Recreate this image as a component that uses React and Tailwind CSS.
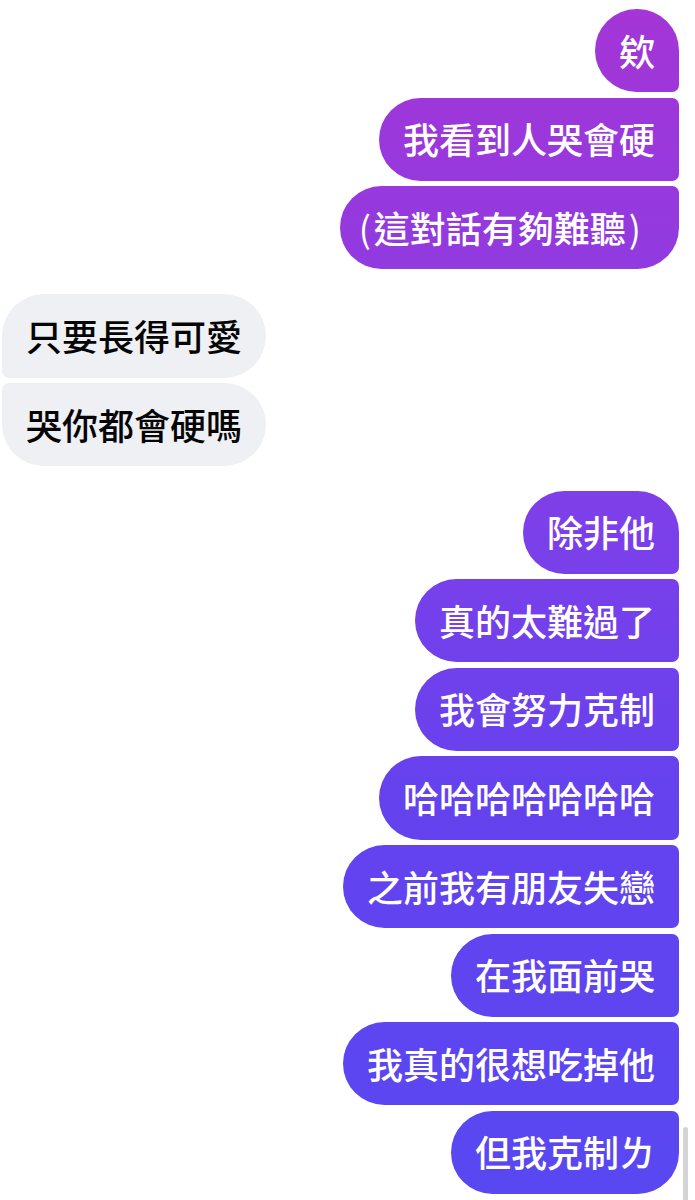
import React from "react";

const grad =
  "bg-[linear-gradient(to_bottom,#a535d6_0%,#7e3fe9_42%,#6442ee_67%,#5848f2_100%)] bg-fixed";

function Out({ children, shape }) {
  return (
    <div className="flex justify-end pr-[16px]">
      <div
        className={`${grad} ${shape} h-[83.3px] px-[24px] pb-[2px] flex items-center text-white text-[36px] leading-none font-medium whitespace-nowrap`}
      >
        {children}
      </div>
    </div>
  );
}

function In({ children, shape }) {
  return (
    <div className="flex justify-start pl-[2px]">
      <div
        className={`bg-[#eff0f4] ${shape} h-[83.3px] px-[24px] pb-[2px] flex items-center text-[#050505] text-[36px] leading-none font-medium whitespace-nowrap`}
      >
        {children}
      </div>
    </div>
  );
}

const firstR = "rounded-l-[42px] rounded-tr-[42px] rounded-br-[7px]";
const midR = "rounded-l-[42px] rounded-r-[7px]";
const lastR = "rounded-l-[42px] rounded-tr-[7px] rounded-br-[42px]";
const inFirst = "rounded-r-[42px] rounded-tl-[42px] rounded-bl-[7px]";
const inLast = "rounded-r-[42px] rounded-tl-[7px] rounded-bl-[42px]";

export default function App() {
  return (
    <div
      className="relative w-[695px] h-[1200px] bg-white overflow-hidden"
      style={{ fontFamily: '"Noto Sans CJK TC", "Noto Sans CJK SC", sans-serif' }}
    >
      <div className="flex flex-col pt-[9px]">
        <div className="flex flex-col gap-[5.3px]">
          <Out shape={firstR}>欸</Out>
          <Out shape={midR}>我看到人哭會硬</Out>
          <Out shape={lastR}>
            <span className="-ml-[5px] mr-[3px] font-normal">(</span>這對話有夠難聽
            <span className="ml-[3px] mr-[14px] font-normal">)</span>
          </Out>
        </div>
        <div className="flex flex-col gap-[5.3px] mt-[24.8px]">
          <In shape={inFirst}>只要長得可愛</In>
          <In shape={inLast}>哭你都會硬嗎</In>
        </div>
        <div className="flex flex-col gap-[5.3px] mt-[24.4px]">
          <Out shape={firstR}>除非他</Out>
          <Out shape={midR}>真的太難過了</Out>
          <Out shape={midR}>我會努力克制</Out>
          <Out shape={midR}>哈哈哈哈哈哈哈</Out>
          <Out shape={midR}>之前我有朋友失戀</Out>
          <Out shape={midR}>在我面前哭</Out>
          <Out shape={midR}>我真的很想吃掉他</Out>
          <Out shape={lastR}>但我克制ㄌ</Out>
        </div>
      </div>
      <div className="absolute left-[683px] top-[1127px] w-[5px] h-[80px] rounded-full bg-[#d4d4d4]" />
    </div>
  );
}
